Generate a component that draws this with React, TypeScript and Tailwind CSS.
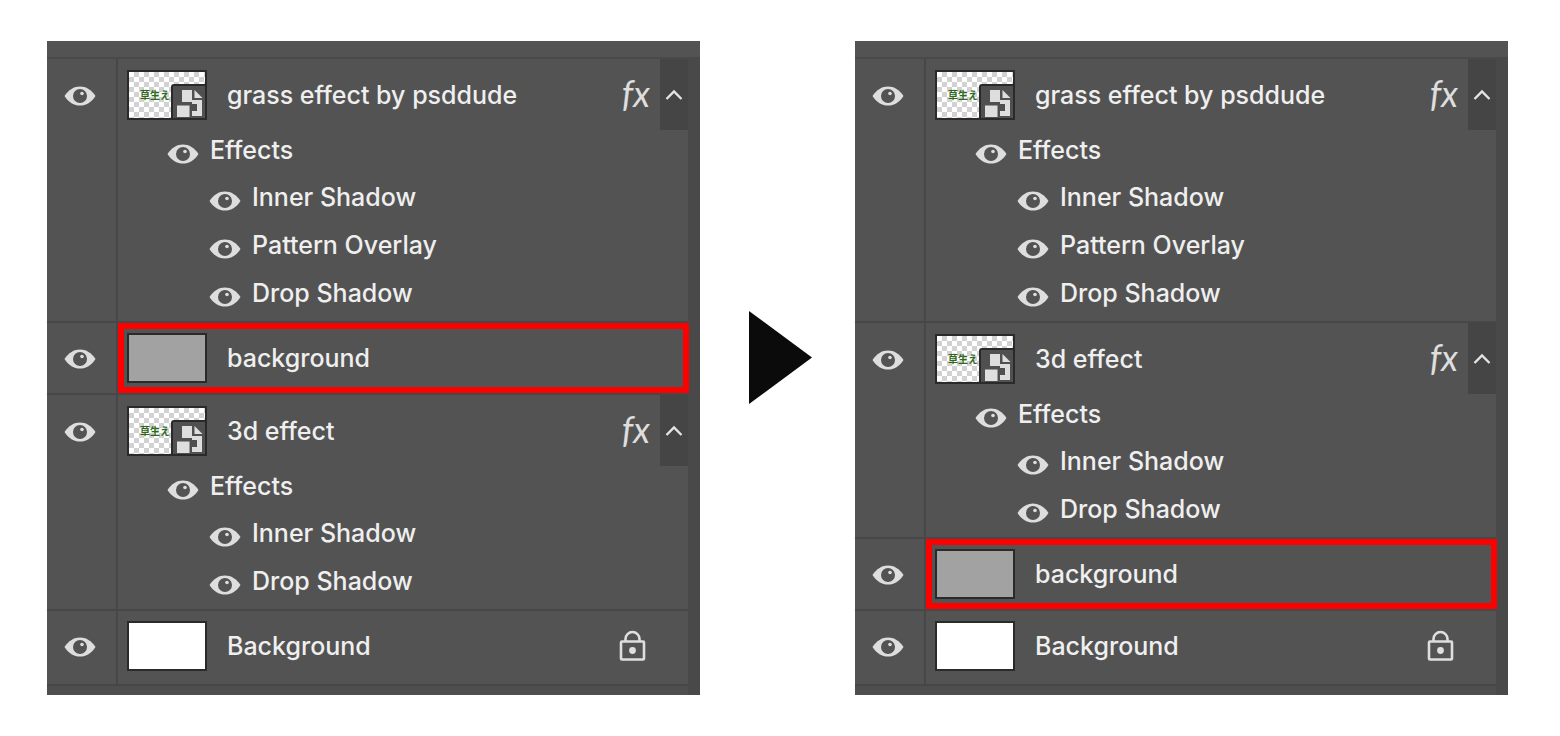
import React from "react";

interface Layer {
  name: string;
  thumb: "smart" | "gray" | "white";
  thumbText?: string;
  effects?: string[];
  locked?: boolean;
  highlighted?: boolean;
}

const grass: Layer = {
  name: "grass effect by psddude",
  thumb: "smart",
  thumbText: "草生える",
  effects: ["Inner Shadow", "Pattern Overlay", "Drop Shadow"],
};
const threeD: Layer = {
  name: "3d effect",
  thumb: "smart",
  thumbText: "草生える",
  effects: ["Inner Shadow", "Drop Shadow"],
};
const fill: Layer = { name: "background", thumb: "gray", highlighted: true };
const base: Layer = { name: "Background", thumb: "white", locked: true };

function EyeButton({ label }: { label: string }) {
  return (
    <button type="button" aria-label={label} className="shrink-0">
      <svg width="32" height="20" viewBox="0 0 32 20">
        <path
          d="M0.5 10C4.5 3.6 10 0.4 16 0.4S27.5 3.6 31.5 10C27.5 16.4 22 19.6 16 19.6S4.5 16.4 0.5 10Z"
          fill="#dedede"
        />
        <circle cx="16" cy="10" r="7" fill="#535353" />
        <circle cx="18" cy="7.5" r="1.8" fill="#dedede" />
      </svg>
    </button>
  );
}

function Thumb({ layer }: { layer: Layer }) {
  if (layer.thumb === "gray") {
    return <div className="h-[50px] w-20 shrink-0 border-2 border-[#2a2a2a] bg-[#a2a2a2]" />;
  }
  if (layer.thumb === "white") {
    return <div className="h-[50px] w-20 shrink-0 border-2 border-[#2a2a2a] bg-white" />;
  }
  return (
    <div className="relative flex h-[50px] w-20 shrink-0 items-center overflow-hidden border-2 border-[#2a2a2a] bg-white bg-[conic-gradient(#d2d2d2_25%,#fff_0_50%,#d2d2d2_0_75%,#fff_0)] bg-[length:10px_10px] pl-[11px]">
      <span className="text-[10px] leading-none font-bold whitespace-nowrap text-[#2f6a1c]">
        {layer.thumbText}
      </span>
      <svg className="absolute right-0 bottom-0" width="34" height="34" viewBox="0 0 34 34">
        <path d="M0 34V3Q0 0 3 0H34V34Z" fill="#2a2a2a" />
        <path d="M2 34V3Q2 2 3 2H34V34Z" fill="#505050" />
        <path d="M11 6H21V16H31V32H21V27H26V20H21V18H11Z" fill="#dedede" />
        <path d="M23.5 6L31.500 14H23.500Z" fill="#dedede" />
        <path d="M6 21.500H18.500V33H6Z" fill="#dedede" />
      </svg>
    </div>
  );
}

function LayerRow({ layer }: { layer: Layer }) {
  const headHeight = layer.effects ? "h-[71px]" : "h-[70px]";

  return (
    <li className="flex border-b-2 border-[#474747]">
      <div className="flex w-[71px] shrink-0 items-start border-r-2 border-[#474747]">
        <div className={`flex w-full items-center justify-center pt-0.5 pr-1 ${headHeight}`}>
          <EyeButton label={`Toggle ${layer.name}`} />
        </div>
      </div>
      <div className={`relative min-w-0 flex-1 ${layer.locked ? "pb-[3px]" : ""}`}>
        <div className={`flex items-center pl-[9px] ${headHeight}`}>
          <Thumb layer={layer} />
          <span className="ml-5 flex-1 truncate">{layer.name}</span>
          {layer.effects && (
            <>
              <span className="mr-[10px] pb-1 font-['Lato'] text-[36px] leading-none font-normal text-[#dedede] italic">
                fx
              </span>
              <button
                type="button"
                aria-label="Collapse effects"
                className="flex h-full w-7 items-center justify-center bg-[#454545]"
              >
                <svg width="18" height="12" viewBox="0 0 18 12" fill="none">
                  <path d="M1.5 10L9 2.5L16.5 10" stroke="#e4e4e4" strokeWidth="2.4" />
                </svg>
              </button>
            </>
          )}
          {layer.locked && (
            <svg className="mr-[41px]" width="28" height="32" viewBox="0 0 28 32" fill="none">
              <rect x="2" y="11.500" width="23" height="18" rx="1" stroke="#dedede" strokeWidth="2.6" />
              <path d="M6.5 11.500V9a7 7 0 0 1 14 0V11.500" stroke="#dedede" strokeWidth="2.6" />
              <circle cx="13.500" cy="20.500" r="3.400" fill="#dedede" />
            </svg>
          )}
        </div>
        {layer.effects && (
          <>
            <div className="flex h-[47px] items-center gap-[11px] pl-[49px]">
              <EyeButton label="Toggle effects" />
              <span className="pb-2">Effects</span>
            </div>
            <ul>
              {layer.effects.map((effect) => (
                <li key={effect} className="flex h-12 items-center gap-[11px] pl-[91px]">
                  <EyeButton label={`Toggle ${effect}`} />
                  <span className="pb-2">{effect}</span>
                </li>
              ))}
            </ul>
          </>
        )}
        {layer.highlighted && (
          <div className="pointer-events-none absolute inset-y-0 -right-px left-0 border-6 border-[#fe0000]" />
        )}
      </div>
    </li>
  );
}

function LayersPanel({ layers }: { layers: Layer[] }) {
  return (
    <section className="flex bg-[#535353]">
      <div className="min-w-0 flex-1">
        <div className="h-[18px] border-b-2 border-[#4a4a4a]" />
        <ul>
          {layers.map((layer) => (
            <LayerRow key={layer.name} layer={layer} />
          ))}
        </ul>
        <div className="h-[9px] bg-[#4e4e4e]" />
      </div>
      <div className="mt-4 w-3 bg-[#494949]" />
    </section>
  );
}

export default function App() {
  return (
    <main className="grid min-h-screen grid-cols-[1fr_155px_1fr] items-start bg-white pt-[41px] pr-[52px] pl-[47px] font-['Inter','Noto_Sans_CJK_JP',sans-serif] text-[25px] leading-8 font-medium text-[#efefef]">
      <LayersPanel layers={[grass, fill, threeD, base]} />
      <div className="flex items-center justify-center self-start pt-[270px] pl-[6px]">
        <svg width="63" height="93" viewBox="0 0 63 93">
          <path d="M0 0L63 46.5L0 93Z" fill="#0b0b0b" />
        </svg>
      </div>
      <LayersPanel layers={[grass, threeD, fill, base]} />
    </main>
  );
}
